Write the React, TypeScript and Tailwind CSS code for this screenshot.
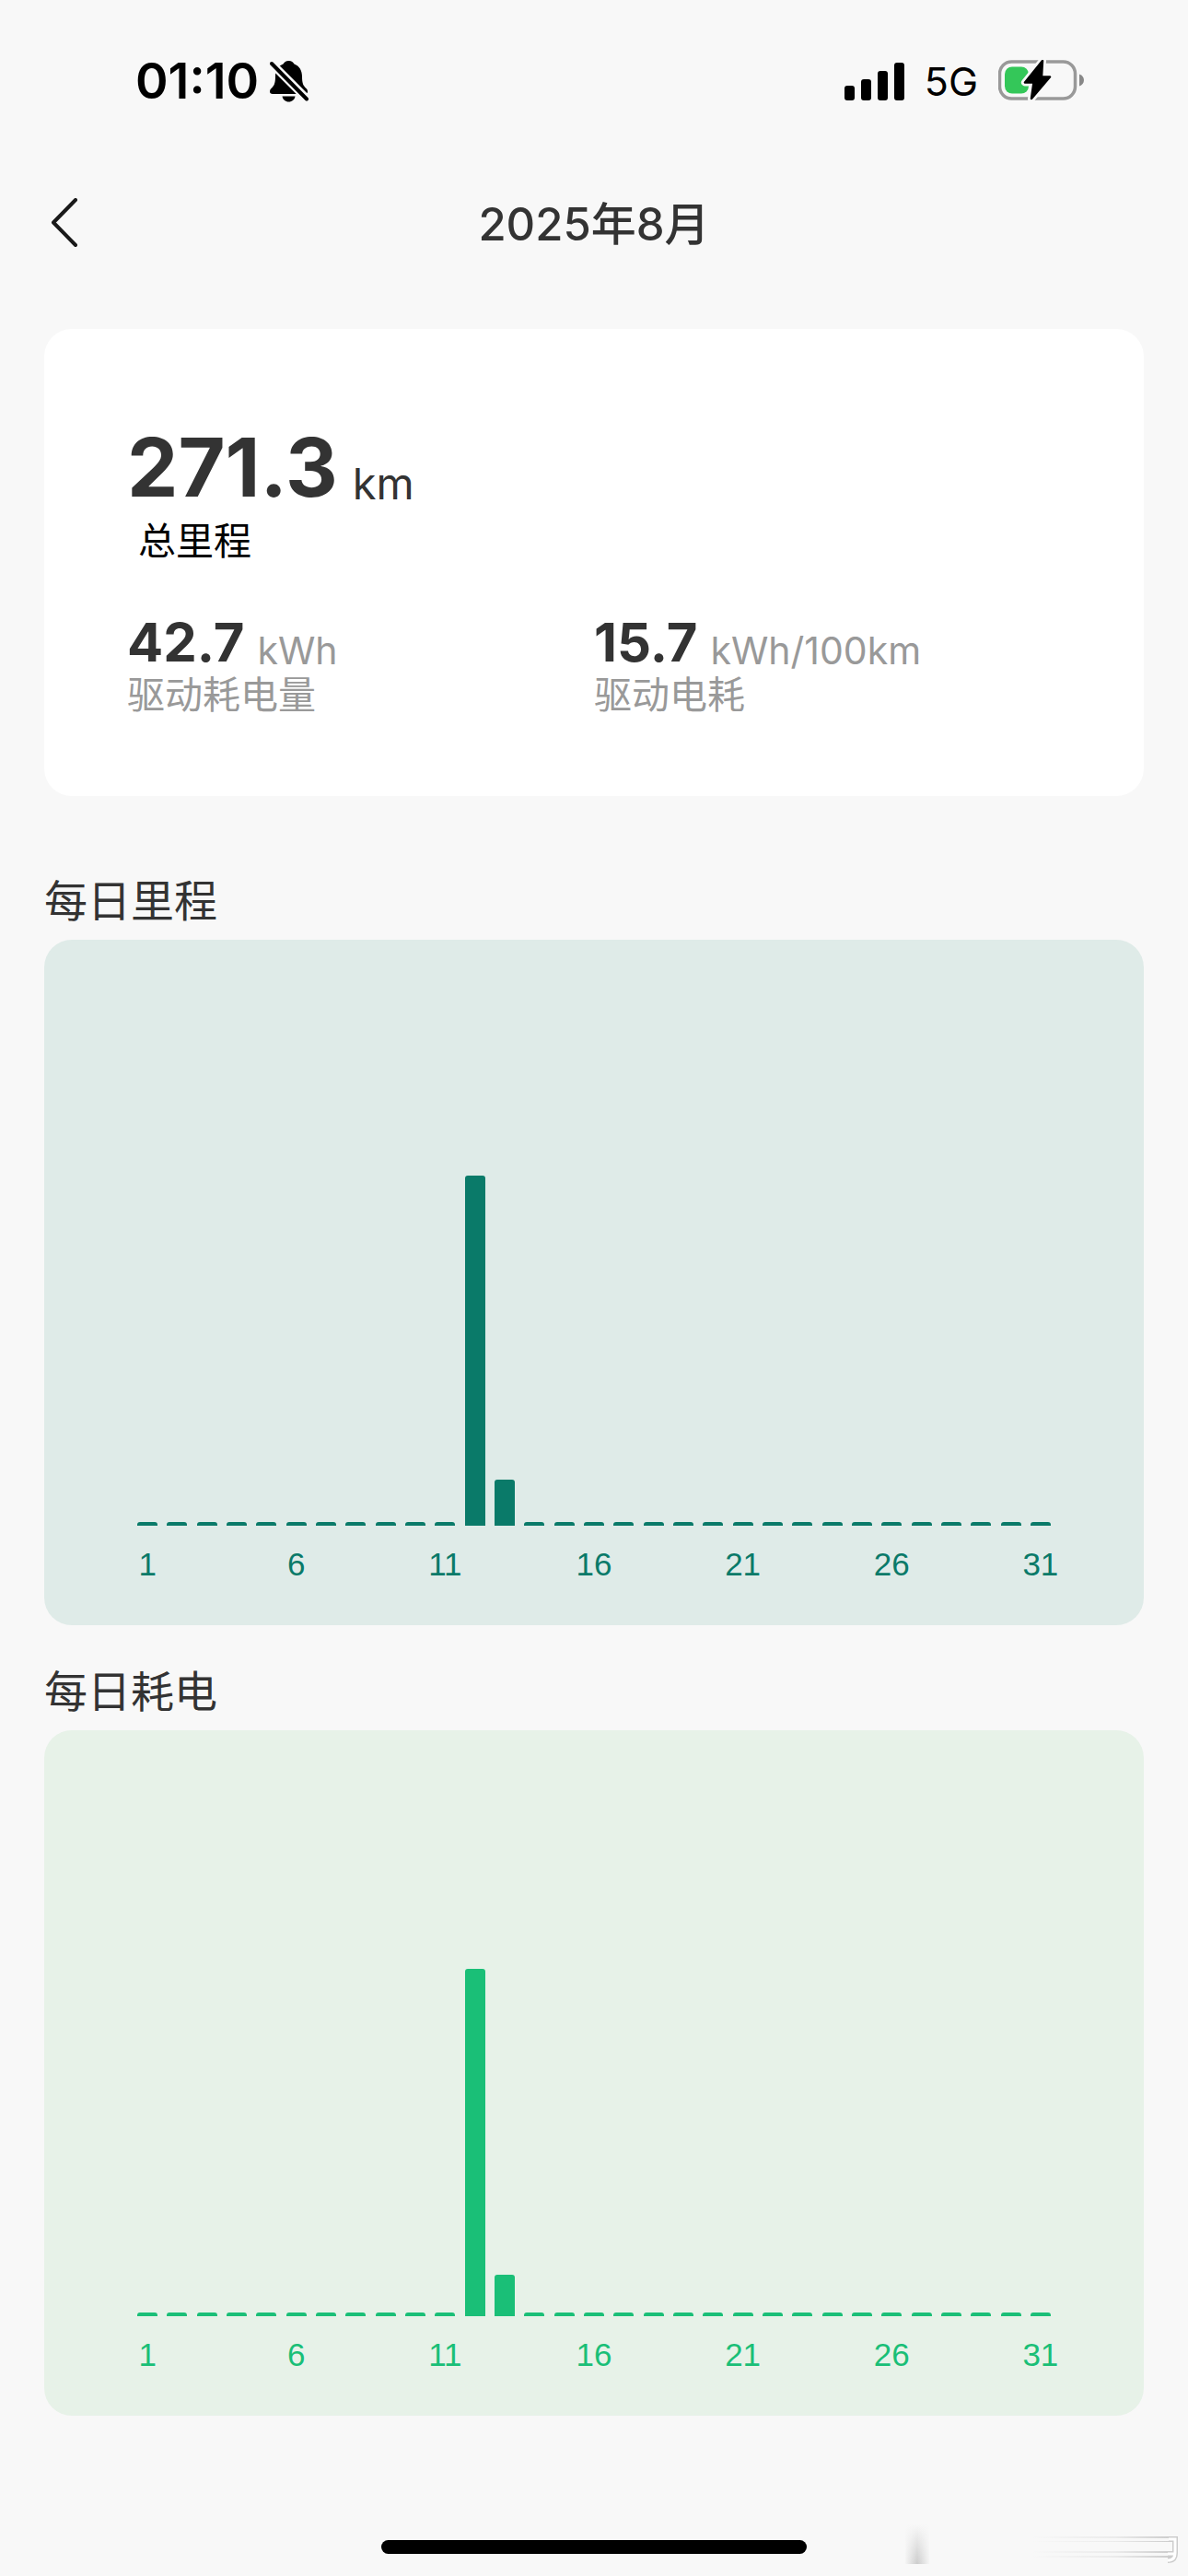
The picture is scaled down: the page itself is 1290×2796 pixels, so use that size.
import { clsx } from 'clsx';

type ChartTone = 'teal' | 'green';

interface DayValue {
  day: number;
  height: number;
}

interface DailyChartProps {
  title: string;
  tone: ChartTone;
  values: DayValue[];
}

const DAYS = Array.from({ length: 31 }, (_, i) => i + 1);

const MILEAGE: DayValue[] = [
  { day: 12, height: 380 },
  { day: 13, height: 50 },
];

const ENERGY: DayValue[] = [
  { day: 12, height: 377 },
  { day: 13, height: 45 },
];

function BellOffIcon() {
  return (
    <svg width="42" height="46" viewBox="0 0 42 46" fill="none" aria-hidden="true">
      <path
        d="M20.500 1C23.500 1 25.500 2.700 26.500 4.500C32 6.500 35 11.500 35 18C35 26 36.500 28 39.500 31C40.500 32 41 33 41 34.500C41 36 40 37 38 37H3C1 37 0 36 0 34.500C0 33 .5 32 1.500 31C4.500 28 6 26 6 18C6 11.500 9 6.500 14.500 4.500C15.500 2.700 17.500 1 20.500 1Z"
        fill="#000"
      />
      <path d="M13.500 39.500H27.500C27 43 24 45.500 20.500 45.500S14 43 13.500 39.500Z" fill="#000" />
      <path d="M-2 0L42 44" stroke="#f8f8f8" strokeWidth="9" />
      <path d="M2 4L40 42.500" stroke="#000" strokeWidth="4" strokeLinecap="round" />
    </svg>
  );
}

function SignalIcon() {
  return (
    <svg width="65" height="41" viewBox="0 0 65 41" aria-hidden="true">
      <rect x="0" y="25" width="11" height="16" rx="3" />
      <rect x="18" y="18" width="11" height="23" rx="3" />
      <rect x="36" y="9" width="11" height="32" rx="3" />
      <rect x="54" y="0" width="11" height="41" rx="3" />
    </svg>
  );
}

function BatteryIcon() {
  const bolt = 'M48 1L29 24.500H38.500L36 42L56 18.500H47Z';
  return (
    <svg width="94" height="46" viewBox="0 0 94 46" fill="none" aria-hidden="true">
      <rect x="1.500" y="2" width="82" height="40" rx="13" stroke="#999" strokeWidth="3.500" />
      <path d="M88 15.500C91 16.500 93 19 93 22S91 27.500 88 28.500Z" fill="#888" />
      <rect x="7" y="7.500" width="26" height="29" rx="8" fill="#34c759" />
      <path d={bolt} fill="#000" stroke="#f8f8f8" strokeWidth="8" strokeLinejoin="round" />
      <path d={bolt} fill="#000" stroke="#000" strokeWidth="2.500" strokeLinejoin="round" />
    </svg>
  );
}

function StatusBar() {
  return (
    <div className="flex h-[176px] items-center justify-between pr-[112px] pl-[147px] text-black">
      <div className="flex items-center gap-3">
        <span className="text-[54px] leading-[54px] font-semibold">01:10</span>
        <BellOffIcon />
      </div>
      <div className="flex items-center gap-[22px]">
        <SignalIcon />
        <span className="text-[43px] leading-[54px]">5G</span>
        <BatteryIcon />
      </div>
    </div>
  );
}

function Header() {
  return (
    <header className="grid h-[132px] grid-cols-[120px_1fr_120px] items-center">
      <button type="button" aria-label="返回" className="flex h-full items-center pl-[55px]">
        <svg width="30" height="54" viewBox="0 0 30 54" fill="none" aria-hidden="true">
          <path
            d="M27 2L3 26.500L27 51"
            stroke="#1a1a1a"
            strokeWidth="4"
            strokeLinecap="round"
            strokeLinejoin="round"
          />
        </svg>
      </button>
      <h1 className="pt-1 text-center text-[49px] leading-[60px] font-medium">2025年8月</h1>
    </header>
  );
}

function Stat({ value, unit, label }: { value: string; unit: string; label: string }) {
  return (
    <div>
      <div className="flex items-end gap-[14px]">
        <span className="text-[58px] leading-[60px] font-bold">{value}</span>
        <span className="text-[41px] leading-[42px] text-[#999]">{unit}</span>
      </div>
      <div className="text-[41px] leading-[54px] text-[#999]">{label}</div>
    </div>
  );
}

function SummaryCard() {
  return (
    <section className="rounded-[30px] bg-white px-[90px] pt-[106px] pb-[83px]">
      <div className="flex items-end gap-4">
        <span className="text-[88px] leading-[88px] font-bold">271.3</span>
        <span className="text-[47px] leading-[52px]">km</span>
      </div>
      <div className="pl-3 text-[41px] leading-[72px] text-black">总里程</div>
      <div className="mt-11 grid grid-cols-2">
        <Stat value="42.7" unit="kWh" label="驱动耗电量" />
        <Stat value="15.7" unit="kWh/100km" label="驱动电耗" />
      </div>
    </section>
  );
}

function DailyChart({ title, tone, values }: DailyChartProps) {
  const heights = new Map(values.map((v) => [v.day, v.height]));

  return (
    <section>
      <h2 className="text-[47px] leading-[84px]">{title}</h2>
      <div
        className={clsx(
          'rounded-[30px] px-24 pb-9',
          tone === 'teal' ? 'bg-[#dfebe8] text-[#0a7a69]' : 'bg-[#e7f2e8] text-[#1abf77]'
        )}
      >
        <div className="grid h-[636px] grid-cols-31 items-end">
          {DAYS.map((day) => (
            <div
              key={day}
              className="w-[22px] justify-self-center rounded-t-[3px] bg-current"
              style={{ height: heights.get(day) ?? 4 }}
            />
          ))}
        </div>
        {/* Axis labels, every fifth day */}
        <div className="grid grid-cols-31 pt-3 font-['Liberation_Sans'] text-[35px] leading-[60px]">
          {DAYS.map((day) => (
            <span key={day} className="flex justify-center">
              {day % 5 === 1 && day}
            </span>
          ))}
        </div>
      </div>
    </section>
  );
}

// Faint smudge in the bottom corner
function CornerMark() {
  return (
    <svg width="310" height="48" viewBox="0 0 310 48" fill="none" aria-hidden="true">
      <defs>
        <linearGradient id="smudge-x" x1="0" x2="1" y1="0" y2="0">
          <stop offset="0" stopColor="#f8f8f8" />
          <stop offset=".5" stopColor="#f8f8f8" stopOpacity="0" />
          <stop offset="1" stopColor="#f8f8f8" />
        </linearGradient>
        <linearGradient id="smudge-y" x1="0" x2="0" y1="0" y2="1">
          <stop offset="0" stopColor="#ccc" stopOpacity="0" />
          <stop offset="1" stopColor="#ccc" />
        </linearGradient>
        <linearGradient id="streak" gradientUnits="userSpaceOnUse" x1="140" x2="292" y1="0" y2="0">
          <stop offset="0" stopColor="#ccc" stopOpacity="0" />
          <stop offset=".6" stopColor="#ccc" stopOpacity=".3" />
          <stop offset="1" stopColor="#ccc" />
        </linearGradient>
      </defs>
      <rect x="3" y="0" width="26" height="43" fill="url(#smudge-y)" />
      <rect x="2" y="0" width="28" height="44" fill="url(#smudge-x)" />
      <rect x="100" y="13" width="192" height="2" fill="url(#streak)" />
      <rect x="100" y="18" width="192" height="1" fill="url(#streak)" />
      <rect x="100" y="29" width="192" height="2" fill="url(#streak)" />
      <rect x="100" y="34" width="192" height="2" fill="url(#streak)" />
      <path d="M289 16H296V31C296 37 293 39 288 39M288 32H295" stroke="#ccc" strokeWidth="6" />
      <path d="M289 16H296V31C296 37 293 39 288 39M288 32H295" stroke="#fff" strokeWidth="3" />
    </svg>
  );
}

export default function App() {
  return (
    <div className="flex min-h-screen flex-col bg-[#f8f8f8] font-['Inter','Noto_Sans_CJK_SC',sans-serif] text-[#333]">
      <StatusBar />
      <Header />
      <main className="flex-1 px-12 pt-[49px]">
        <SummaryCard />
        <div className="mt-[72px] space-y-[30px]">
          <DailyChart title="每日里程" tone="teal" values={MILEAGE} />
          <DailyChart title="每日耗电" tone="green" values={ENERGY} />
        </div>
      </main>
      <footer className="grid grid-cols-[1fr_462px_1fr] items-center pb-2">
        <div className="col-start-2 h-[15px] rounded-full bg-black" />
        <div className="justify-self-end">
          <CornerMark />
        </div>
      </footer>
    </div>
  );
}
